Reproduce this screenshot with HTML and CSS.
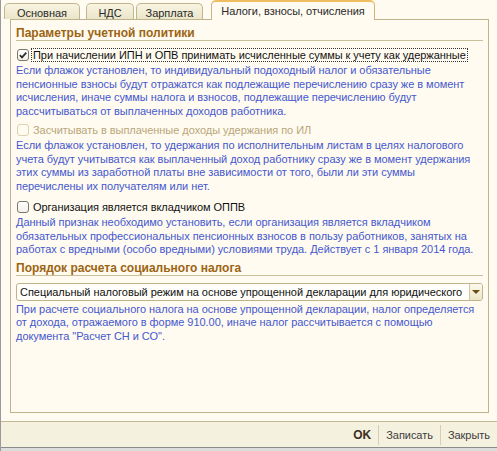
FILE: index.html
```html
<!DOCTYPE html>
<html lang="ru">
<head>
<meta charset="utf-8">
<title>Налоги, взносы, отчисления</title>
<link rel="stylesheet" href="styles.css">
</head>
<body>
<div class="window">
  <div class="tabs">
    <div class="tab t1">Основная</div>
    <div class="tab t2">НДС</div>
    <div class="tab t3">Зарплата</div>
    <div class="tab active t4">Налоги, взносы, отчисления</div>
  </div>
  <div class="panel">
    <div class="group-title g1">Параметры учетной политики</div>

    <div class="check c1">
      <span class="box"><svg width="10" height="10" viewBox="0 0 10 10"><path d="M1.8 5.2 L4 7.4 L8.3 2.6" fill="none" stroke="#2c2c2c" stroke-width="1.7"/></svg></span>
      <span class="label focus">При начислении ИПН и ОПВ принимать исчисленные суммы к учету как удержанные</span>
    </div>
    <p class="desc d1">Если флажок установлен, то индивидуальный подоходный налог и обязательные пенсионные взносы будут отражатся как подлежащие перечислению сразу же в момент исчисления, иначе суммы налога и взносов, подлежащие перечислению будут рассчитываться от выплаченных доходов работника.</p>

    <div class="check c2 disabled">
      <span class="box"></span>
      <span class="label">Засчитывать в выплаченные доходы удержания по ИЛ</span>
    </div>
    <p class="desc d2">Если флажок установлен, то удержания по исполнительным листам в целях налогового учета будут учитыватся как выплаченный доход работнику сразу же в момент удержания этих суммы из заработной платы вне зависимости от того, были ли эти суммы перечислены их получателям или нет.</p>

    <div class="check c3">
      <span class="box"></span>
      <span class="label">Организация является вкладчиком ОППВ</span>
    </div>
    <p class="desc d3">Данный признак необходимо установить, если организация является вкладчиком обязательных профессиональных пенсионных взносов в пользу работников, занятых на работах с вредными (особо вредными) условиями труда. Действует с 1 января 2014 года.</p>

    <div class="group-title g2">Порядок расчета социального налога</div>

    <div class="combo">
      <span class="combo-text">Специальный налоговый режим на основе упрощенной декларации для юридического</span>
      <span class="combo-btn"><span class="arrow"></span></span>
    </div>
    <p class="desc d4">При расчете социального налога на основе упрощенной декларации, налог определяется от дохода, отражаемого в форме 910.00, иначе налог рассчитывается с помощью документа "Расчет СН и СО".</p>
  </div>
  <div class="footer">
    <span class="fbtn ok">OK</span>
    <span class="fbtn">Записать</span>
    <span class="fbtn">Закрыть</span>
  </div>
  <div class="bottom-edge"></div>
</div>
</body>
</html>
```

FILE: styles.css
```css
* { box-sizing: border-box; }

html, body {
  margin: 0;
  padding: 0;
  background: #fffbf0;
}

body {
  font-family: "Liberation Sans", Arial, sans-serif;
  font-size: 11px;
  letter-spacing: -0.04px;
  color: #1a1a1a;
}

.window {
  width: 497px;
  height: 451px;
  border-left: 1px solid #9a9a9a;
  display: flex;
  flex-direction: column;
  background: #fffbf0;
}

/* Tabs */
.tabs {
  height: 19px;
  display: flex;
  align-items: flex-end;
  padding-left: 3px;
}

.tab {
  height: 16px;
  line-height: 16px;
  padding-top: 1px;
  text-align: center;
  color: #2a2a2a;
  border: 1px solid #c2b690;
  border-bottom: none;
  border-radius: 5px 5px 0 0;
  background: linear-gradient(#f8f4e2, #ebe5c9);
  white-space: nowrap;
}

.t1 { width: 76px; }
.t2 { width: 48px; margin-left: 6px; }
.t3 { width: 67px; margin-left: 2px; }
.t4 { width: 164px; margin-left: 8px; }

.tab.active {
  height: 20px;
  padding-top: 1px;
  background: #fffbf0;
  border-top: 2px solid #efbe63;
  border-right-color: #d8b070;
  position: relative;
  z-index: 1;
  margin-bottom: -1px;
}

/* Panel */
.panel {
  margin-left: 9px;
  width: 479px;
  height: 394px;
  border: 1px solid #bfb38e;
  padding: 0 5px;
}

.group-title {
  font-size: 12px;
  letter-spacing: 0;
  font-weight: bold;
  color: #9c6412;
  line-height: 14px;
  height: 15px;
  border-bottom: 1px solid #cbbf9a;
}

.g1 { margin-top: 6px; }
.g2 { margin-top: 4px; }

.check {
  display: flex;
  align-items: center;
  height: 14px;
}

.c1 { margin-top: 7px; }
.c2 { margin-top: 5px; }
.c3 { margin-top: 7px; }

.box {
  width: 12px;
  height: 12px;
  margin-left: 1px;
  border: 1px solid #7b776a;
  border-radius: 3px;
  background: linear-gradient(#ffffff, #f3f1ea);
  display: flex;
  align-items: center;
  justify-content: center;
  flex: none;
}

.disabled .box {
  border-color: #dcd2b0;
  background: #fffbf0;
}

.label {
  margin-left: 3px;
  line-height: 12px;
  padding: 0 1px;
  color: #111;
  white-space: nowrap;
}

.label.focus {
  outline: 1px dotted #333;
  outline-offset: 0;
}

.disabled .label {
  color: #b8a67a;
}

.desc {
  margin: 2px 0 0 0;
  color: #4558cf;
  line-height: 13.5px;
}

/* Combo */
.combo {
  margin-top: 7px;
  height: 18px;
  border: 1px solid #bfb38e;
  border-radius: 3px;
  background: #fffefa;
  display: flex;
  align-items: center;
  padding-left: 3px;
}

.combo-text {
  flex: 1;
  white-space: nowrap;
  overflow: hidden;
  color: #111;
}

.combo-btn {
  width: 13px;
  height: 16px;
  border-left: 1px solid #cfc4a0;
  border-radius: 0 2px 2px 0;
  background: linear-gradient(#fdfaee, #ece5c7);
  display: flex;
  align-items: center;
  justify-content: center;
}

.arrow {
  width: 0;
  height: 0;
  border-left: 4px solid transparent;
  border-right: 4px solid transparent;
  border-top: 4px solid #6b4d10;
}

/* Footer */
.footer {
  margin-top: 8px;
  height: 26px;
  border-top: 1px solid #c3b893;
  background: #f4f1df;
  display: flex;
  justify-content: flex-end;
  align-items: center;
}

.fbtn {
  padding: 0 7px;
  line-height: 20px;
  color: #3d3d3d;
  border-left: 1px solid #d6ceb0;
}

.fbtn.ok {
  border-left: none;
  font-weight: bold;
  font-size: 12px;
  letter-spacing: 0;
  color: #3a3020;
}

.bottom-edge {
  flex: 1;
  border-top: 1px solid #8c8c8c;
  background: #dcdcdc;
}
```
